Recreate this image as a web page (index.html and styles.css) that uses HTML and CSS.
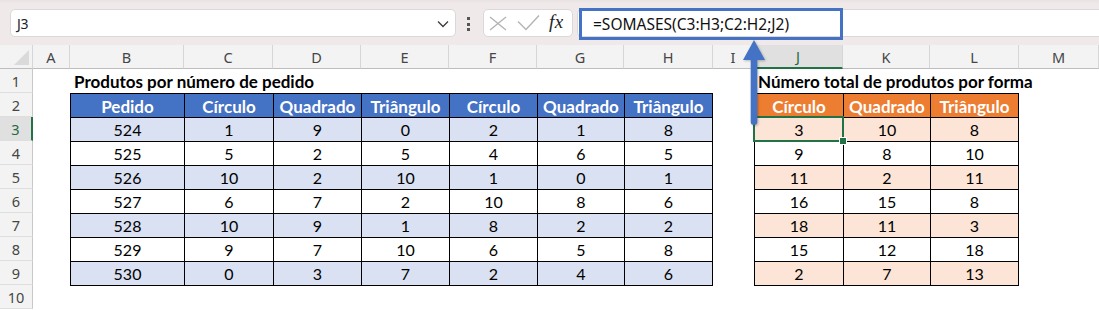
FILE: index.html
```html
<!DOCTYPE html>
<html lang="pt">
<head>
<meta charset="utf-8">
<title>SOMASES</title>
<link rel="stylesheet" href="styles.css">
</head>
<body>
<div class="app">
  <div class="toolbar">
    <div class="namebox">
      <span class="name">J3</span>
      <svg class="chev" width="12" height="8" viewBox="0 0 12 8"><polyline points="1,1.5 6,6.5 11,1.5" fill="none" stroke="#3c3c3c" stroke-width="1.3"/></svg>
    </div>
    <div class="dots"><i></i><i></i><i></i></div>
    <div class="fxbox">
      <svg class="ico-x" width="18" height="15" viewBox="0 0 18 15"><path d="M1 1 L17 14 M17 1 L1 14" stroke="#b4b4b4" stroke-width="1.4" fill="none"/></svg>
      <svg class="ico-ok" width="23" height="17" viewBox="0 0 23 17"><polyline points="1,7.5 9,15.5 22,1.5" fill="none" stroke="#b4b4b4" stroke-width="1.4"/></svg>
      <span class="fx">fx</span>
    </div>
    <div class="formula">
      <div class="formula-hl">=SOMASES(C3:H3;C2:H2;J2)</div>
    </div>
  </div>

  <div class="sheet">
    <div class="corner"></div>
    <div class="colh">A</div>
    <div class="colh">B</div>
    <div class="colh">C</div>
    <div class="colh">D</div>
    <div class="colh">E</div>
    <div class="colh">F</div>
    <div class="colh">G</div>
    <div class="colh">H</div>
    <div class="colh">I</div>
    <div class="colh sel">J</div>
    <div class="colh">K</div>
    <div class="colh">L</div>
    <div class="colh">M</div>

    <div class="rowh">1</div>
    <div class="rowh">2</div>
    <div class="rowh sel">3</div>
    <div class="rowh">4</div>
    <div class="rowh">5</div>
    <div class="rowh">6</div>
    <div class="rowh">7</div>
    <div class="rowh">8</div>
    <div class="rowh">9</div>
    <div class="rowh">10</div>

    <div class="title title-left">Produtos por número de pedido</div>
    <div class="title title-right">Número total de produtos por forma</div>

    <div class="tbl tbl-blue">
      <div class="th">Pedido</div><div class="th">Círculo</div><div class="th">Quadrado</div><div class="th">Triângulo</div><div class="th">Círculo</div><div class="th">Quadrado</div><div class="th">Triângulo</div>
      <div class="td">524</div><div class="td">1</div><div class="td">9</div><div class="td">0</div><div class="td">2</div><div class="td">1</div><div class="td">8</div>
      <div class="td">525</div><div class="td">5</div><div class="td">2</div><div class="td">5</div><div class="td">4</div><div class="td">6</div><div class="td">5</div>
      <div class="td">526</div><div class="td">10</div><div class="td">2</div><div class="td">10</div><div class="td">1</div><div class="td">0</div><div class="td">1</div>
      <div class="td">527</div><div class="td">6</div><div class="td">7</div><div class="td">2</div><div class="td">10</div><div class="td">8</div><div class="td">6</div>
      <div class="td">528</div><div class="td">10</div><div class="td">9</div><div class="td">1</div><div class="td">8</div><div class="td">2</div><div class="td">2</div>
      <div class="td">529</div><div class="td">9</div><div class="td">7</div><div class="td">10</div><div class="td">6</div><div class="td">5</div><div class="td">8</div>
      <div class="td">530</div><div class="td">0</div><div class="td">3</div><div class="td">7</div><div class="td">2</div><div class="td">4</div><div class="td">6</div>
    </div>

    <div class="tbl tbl-orange">
      <div class="th">Círculo</div><div class="th">Quadrado</div><div class="th">Triângulo</div>
      <div class="td active">3</div><div class="td">10</div><div class="td">8</div>
      <div class="td">9</div><div class="td">8</div><div class="td">10</div>
      <div class="td">11</div><div class="td">2</div><div class="td">11</div>
      <div class="td">16</div><div class="td">15</div><div class="td">8</div>
      <div class="td">18</div><div class="td">11</div><div class="td">3</div>
      <div class="td">15</div><div class="td">12</div><div class="td">18</div>
      <div class="td">2</div><div class="td">7</div><div class="td">13</div>
    </div>
  </div>

  <svg class="arrow" width="26" height="88" viewBox="0 0 26 88">
    <path d="M13 1 L24 21 L16.3 21 L16.3 83 Q16.3 86 13 86 Q9.7 86 9.7 83 L9.7 21 L2 21 Z" fill="#4472c4"/>
  </svg>
</div>
</body>
</html>
```

FILE: styles.css
```css
* { box-sizing: border-box; }

html, body {
  margin: 0;
  padding: 0;
  background: #ffffff;
}

.app {
  position: relative;
  width: 1099px;
  height: 310px;
  overflow: hidden;
  font-family: "Noto Sans", "Open Sans", sans-serif;
}

/* ---------- toolbar / formula bar ---------- */
.toolbar {
  height: 45px;
  display: flex;
  align-items: flex-start;
  padding: 9px 0 0 10px;
  background: linear-gradient(#e9e2e4 0, #efe9ea 4px, #efe9ea 100%);
}

.namebox {
  width: 446px;
  height: 28px;
  background: #fff;
  border: 1px solid #dcd7d8;
  border-radius: 5px;
  display: flex;
  align-items: center;
  justify-content: space-between;
  padding: 0 6px 0 6px;
  font-size: 14px;
  color: #222;
}

.name { letter-spacing: -0.2px; }

.chev { display: block; margin-top: 1px; }

.dots {
  width: 4px;
  margin: 8px 12px 0 11px;
  display: flex;
  flex-direction: column;
  gap: 2.5px;
}
.dots i {
  display: block;
  width: 3px;
  height: 3px;
  background: #555;
}

.fxbox {
  width: 90px;
  height: 28px;
  background: #fff;
  border: 1px solid #dcd7d8;
  border-radius: 5px;
  display: flex;
  align-items: center;
  padding-left: 5px;
}
.ico-x { display: block; margin-right: 10px; }
.ico-ok { display: block; margin-right: 9px; margin-top: -1px; }
.fx {
  font-family: "Liberation Serif", "DejaVu Serif", serif;
  font-style: italic;
  font-size: 19px;
  color: #222;
  margin-top: -3px;
  letter-spacing: 0.5px;
}

.formula {
  flex: 1;
  height: 28px;
  margin-left: 4px;
  background: #fff;
  border: 1px solid #dcd7d8;
  border-right: none;
  border-radius: 5px 0 0 5px;
}
.formula-hl {
  width: 264px;
  height: 32px;
  margin: -2px 0 0 1px;
  border: 3px solid #4472c4;
  padding: 0 0 0 11px;
  display: flex;
  align-items: center;
  font-size: 15.5px;
  color: #111;
}

/* ---------- sheet grid ---------- */
.sheet {
  display: grid;
  grid-template-columns: 33px 37px 114px 89px 88px 88px 88px 87px 89px 41px 89px 87px 89px 80px;
  grid-template-rows: repeat(11, 24px);
}

.corner {
  background: #f3f3f3;
  border-right: 1px solid #d6d6d6;
  border-bottom: 1px solid #bdbdbd;
  position: relative;
}
.corner::after {
  content: "";
  position: absolute;
  right: 3px;
  bottom: 3px;
  width: 15px;
  height: 15px;
  background: #dadada;
  clip-path: polygon(100% 0, 100% 100%, 0 100%);
}

.colh {
  background: #f3f3f3;
  border-right: 1px solid #d6d6d6;
  border-bottom: 1px solid #bdbdbd;
  display: flex;
  align-items: center;
  justify-content: center;
  font-size: 14.5px;
  color: #454545;
}
.colh.sel {
  background: #e0e0e0;
  color: #1e6b3f;
  border-bottom: 2px solid #217346;
}

.rowh {
  grid-column: 1;
  background: #f3f3f3;
  border-right: 1px solid #c8c8c8;
  border-bottom: 1px solid #dedede;
  display: flex;
  align-items: center;
  justify-content: center;
  font-size: 14.5px;
  color: #454545;
}
.rowh.sel {
  background: #e0e0e0;
  color: #1e6b3f;
  border-right: 2px solid #217346;
}

.title {
  grid-row: 2;
  align-self: end;
  white-space: nowrap;
  font-family: "Lato", "Liberation Sans", sans-serif;
  font-weight: 700;
  font-size: 17px;
  line-height: 20px;
  color: #000;
  padding-left: 4px;
  padding-bottom: 1px;
}
.title-left { grid-column: 3 / 10; }
.title-right { grid-column: 11 / 15; padding-left: 4px; }

.tbl {
  grid-row: 3 / 11;
  align-self: start;
  display: grid;
  grid-auto-rows: 23px;
  gap: 1px;
  padding: 1px;
  background: #000;
  font-family: "Lato", "Liberation Sans", sans-serif;
  font-size: 16px;
  color: #000;
}
.tbl-blue {
  grid-column: 3 / 10;
  grid-template-columns: 113px 88px 87px 87px 87px 86px 87px;
}
.tbl-orange {
  grid-column: 11 / 14;
  grid-template-columns: 88px 86px 87px;
}

.th, .td {
  display: flex;
  align-items: center;
  justify-content: center;
  line-height: 1;
  padding-top: 1px;
}
.th {
  font-weight: 700;
  font-size: 17px;
  color: #fff;
}
.td { background: #fff; }

.tbl-blue .th { background: #4472c4; }
.tbl-blue .td:nth-child(14n+8),
.tbl-blue .td:nth-child(14n+9),
.tbl-blue .td:nth-child(14n+10),
.tbl-blue .td:nth-child(14n+11),
.tbl-blue .td:nth-child(14n+12),
.tbl-blue .td:nth-child(14n+13),
.tbl-blue .td:nth-child(14n+14) { background: #d9e1f2; }

.tbl-orange .th { background: #ed7d31; }
.tbl-orange .td:nth-child(6n+4),
.tbl-orange .td:nth-child(6n+5),
.tbl-orange .td:nth-child(6n+6) { background: #fce4d6; }

.td.active { position: relative; }
.td.active::before {
  content: "";
  position: absolute;
  left: -2px;
  top: -2px;
  right: -1px;
  bottom: -1px;
  border: 2px solid #217346;
}
.td.active::after {
  content: "";
  position: absolute;
  right: -4px;
  bottom: -4px;
  width: 6px;
  height: 6px;
  background: #217346;
  border: 1px solid #fff;
}

/* annotation arrow */
.arrow {
  position: absolute;
  left: 741px;
  top: 39px;
  filter: drop-shadow(1px 1px 1px rgba(0,0,0,0.25));
}
```
